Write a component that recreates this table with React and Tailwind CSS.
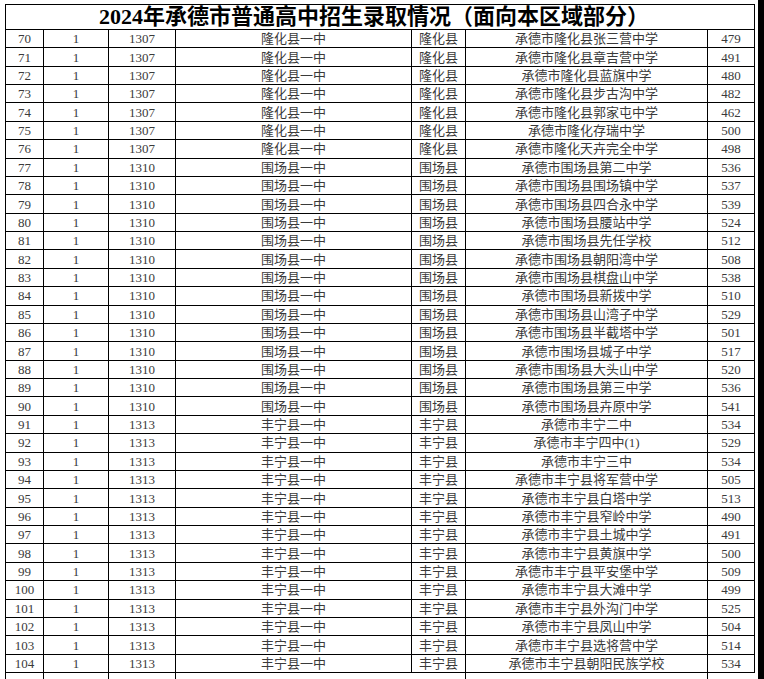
import React from "react";

const rows = [
  [70, "1307", "隆化县一中", "隆化县", "承德市隆化县张三营中学", 479],
  [71, "1307", "隆化县一中", "隆化县", "承德市隆化县章吉营中学", 491],
  [72, "1307", "隆化县一中", "隆化县", "承德市隆化县蓝旗中学", 480],
  [73, "1307", "隆化县一中", "隆化县", "承德市隆化县步古沟中学", 482],
  [74, "1307", "隆化县一中", "隆化县", "承德市隆化县郭家屯中学", 462],
  [75, "1307", "隆化县一中", "隆化县", "承德市隆化存瑞中学", 500],
  [76, "1307", "隆化县一中", "隆化县", "承德市隆化天卉完全中学", 498],
  [77, "1310", "围场县一中", "围场县", "承德市围场县第二中学", 536],
  [78, "1310", "围场县一中", "围场县", "承德市围场县围场镇中学", 537],
  [79, "1310", "围场县一中", "围场县", "承德市围场县四合永中学", 539],
  [80, "1310", "围场县一中", "围场县", "承德市围场县腰站中学", 524],
  [81, "1310", "围场县一中", "围场县", "承德市围场县先任学校", 512],
  [82, "1310", "围场县一中", "围场县", "承德市围场县朝阳湾中学", 508],
  [83, "1310", "围场县一中", "围场县", "承德市围场县棋盘山中学", 538],
  [84, "1310", "围场县一中", "围场县", "承德市围场县新拨中学", 510],
  [85, "1310", "围场县一中", "围场县", "承德市围场县山湾子中学", 529],
  [86, "1310", "围场县一中", "围场县", "承德市围场县半截塔中学", 501],
  [87, "1310", "围场县一中", "围场县", "承德市围场县城子中学", 517],
  [88, "1310", "围场县一中", "围场县", "承德市围场县大头山中学", 520],
  [89, "1310", "围场县一中", "围场县", "承德市围场县第三中学", 536],
  [90, "1310", "围场县一中", "围场县", "承德市围场县卉原中学", 541],
  [91, "1313", "丰宁县一中", "丰宁县", "承德市丰宁二中", 534],
  [92, "1313", "丰宁县一中", "丰宁县", "承德市丰宁四中(1)", 529],
  [93, "1313", "丰宁县一中", "丰宁县", "承德市丰宁三中", 534],
  [94, "1313", "丰宁县一中", "丰宁县", "承德市丰宁县将军营中学", 505],
  [95, "1313", "丰宁县一中", "丰宁县", "承德市丰宁县白塔中学", 513],
  [96, "1313", "丰宁县一中", "丰宁县", "承德市丰宁县窄岭中学", 490],
  [97, "1313", "丰宁县一中", "丰宁县", "承德市丰宁县土城中学", 491],
  [98, "1313", "丰宁县一中", "丰宁县", "承德市丰宁县黄旗中学", 500],
  [99, "1313", "丰宁县一中", "丰宁县", "承德市丰宁县平安堡中学", 509],
  [100, "1313", "丰宁县一中", "丰宁县", "承德市丰宁县大滩中学", 499],
  [101, "1313", "丰宁县一中", "丰宁县", "承德市丰宁县外沟门中学", 525],
  [102, "1313", "丰宁县一中", "丰宁县", "承德市丰宁县凤山中学", 504],
  [103, "1313", "丰宁县一中", "丰宁县", "承德市丰宁县选将营中学", 514],
  [104, "1313", "丰宁县一中", "丰宁县", "承德市丰宁县朝阳民族学校", 534],
];

const cell = "flex items-center justify-center border-r border-b border-black whitespace-nowrap";

export default function App() {
  return (
    <div
      className="w-[764px] h-[679px] bg-white flex overflow-hidden text-[#3a3a3a]"
      style={{ fontFamily: '"Liberation Serif", "Noto Sans CJK SC", serif' }}
    >
      <div className="w-[5px] shrink-0" />
      <div className="w-[750px] shrink-0 pt-[4px] flex flex-col">
        <div className="h-[26px] border border-black flex items-center justify-center text-[22px] font-bold leading-none text-black pr-[12px] pt-[1px]">
          2024年承德市普通高中招生录取情况（面向本区域部分）
        </div>
        {rows.map((r) => (
          <div key={r[0]} className="h-[18.4px] flex text-[13px] leading-none">
            <div className={`${cell} w-[39px] border-l`}>{r[0]}</div>
            <div className={`${cell} w-[65px]`}>1</div>
            <div className={`${cell} w-[67px]`}>{r[1]}</div>
            <div className={`${cell} w-[236px]`}>{r[2]}</div>
            <div className={`${cell} w-[54px]`}>{r[3]}</div>
            <div className={`${cell} w-[242px]`}>{r[4]}</div>
            <div className={`${cell} w-[47px]`}>{r[5]}</div>
          </div>
        ))}
        <div className="h-[6px] flex">
          <div className="w-[39px] border-l border-r border-black" />
          <div className="w-[65px] border-r border-black" />
          <div className="w-[67px] border-r border-black" />
          <div className="w-[236px]" />
          <div className="w-[54px] border-r border-black" />
          <div className="w-[242px] border-r border-black" />
          <div className="w-[47px]" />
        </div>
      </div>
      <div className="w-[3px] shrink-0" />
      <div className="w-[6px] shrink-0 bg-black" />
    </div>
  );
}
